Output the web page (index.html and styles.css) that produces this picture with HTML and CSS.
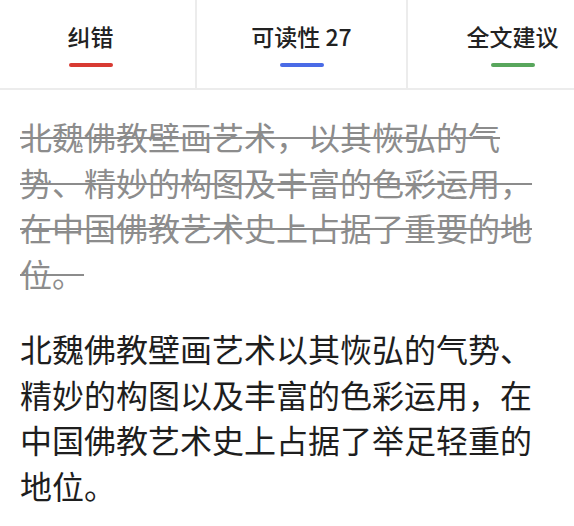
FILE: index.html
```html
<!DOCTYPE html>
<html>
<head lang="zh">
    <meta charset="UTF-8">
    <link rel="stylesheet" href="styles.css">
    <title>纠错</title>
</head>
<body>
<div class="tabs_wrap">
    <div class="tabs">
        <div class="tab">
            <span class="label">纠错</span>
            <span class="bar bar_red"></span>
        </div>
        <div class="tab">
            <span class="label">可读性 27</span>
            <span class="bar bar_blue"></span>
        </div>
        <div class="tab">
            <span class="label">全文建议</span>
            <span class="bar bar_green"></span>
        </div>
    </div>
</div>
<div class="content">
    <p class="old">北魏佛教壁画艺术，以其恢弘的气势、精妙的构图及丰富的色彩运用，在中国佛教艺术史上占据了重要的地位。</p>
    <p class="new">北魏佛教壁画艺术以其恢弘的气势、精妙的构图以及丰富的色彩运用，在中国佛教艺术史上占据了举足轻重的地位。</p>
</div>
</body>
</html>
```

FILE: styles.css
```css
* {
    padding: 0;
    margin: 0;
}

body {
    background: #fff;
    font-family: "Noto Sans CJK SC", "Noto Sans", sans-serif;
    overflow: hidden;
}

.tabs_wrap {
    overflow: hidden;
    border-bottom: 2px solid #ececec;
}

.tabs {
    display: flex;
    margin-left: -14px;
}

.tab {
    width: 209px;
    flex-shrink: 0;
    display: flex;
    flex-direction: column;
    align-items: center;
    padding: 20px 0 21px;
    border-right: 2px solid #ececec;
}

.tab .label {
    font-size: 23px;
    line-height: 32px;
    font-weight: 500;
    color: #222;
}

.tab .bar {
    width: 44px;
    height: 4px;
    margin-top: 11px;
    border-radius: 2px;
}

.bar_red {
    background: #d83a32;
}

.bar_blue {
    background: #4a6be6;
}

.bar_green {
    background: #58a65c;
}

.content {
    padding: 24px 20px 0;
}

.content p {
    font-size: 32px;
    line-height: 45.5px;
}

.old {
    color: #8c8c8c;
    text-decoration: line-through;
    text-decoration-thickness: 2px;
    text-decoration-color: #8c8c8c;
}

.new {
    margin-top: 30px;
    color: #1e1e1e;
}
```
